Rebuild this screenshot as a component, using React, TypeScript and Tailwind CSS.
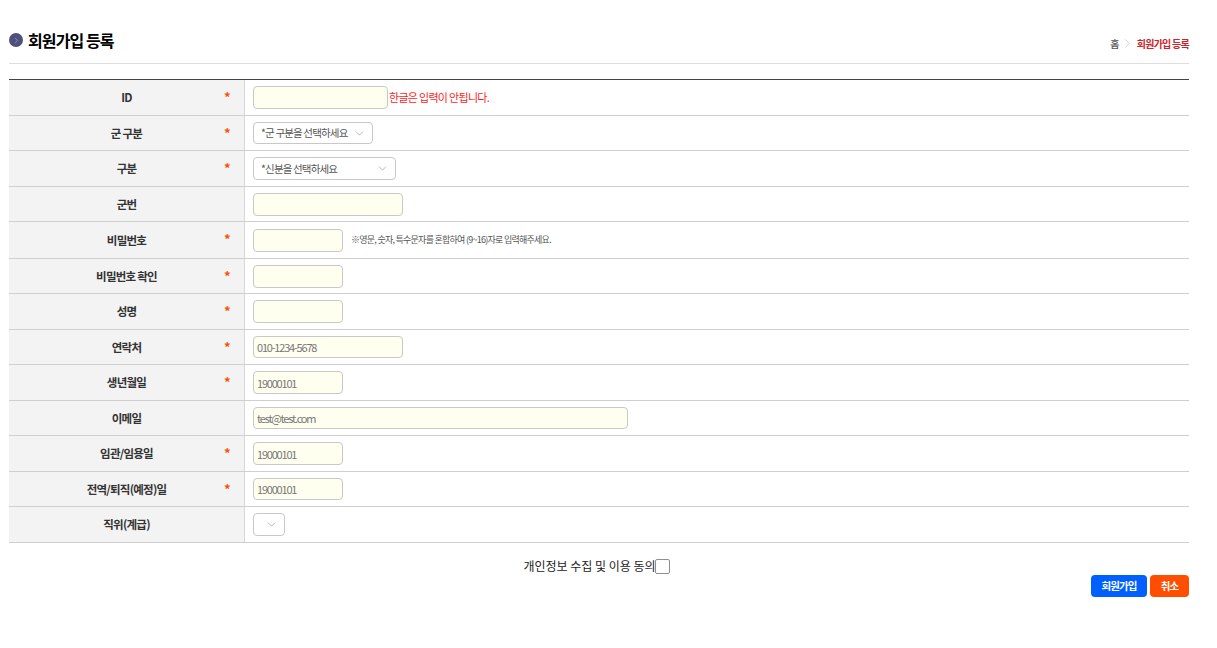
import { ChevronDown, ChevronRight } from 'lucide-react'
import type { ReactNode } from 'react'

const FONT = '"Noto Sans CJK KR", "Noto Sans", sans-serif'

function Row({ label, req, h, children }: { label: string; req?: boolean; h: string; children?: ReactNode }) {
  return (
    <div className={`flex border-b border-[#cfcfcf] ${h}`}>
      <div className="relative flex w-[236px] shrink-0 items-center justify-center border-r border-[#d8d8d8] bg-[#f3f3f3] pt-[1px] text-[11.5px] font-bold tracking-[-0.75px] text-[#333]">
        {label}
        {req && <span className="absolute left-[215px] top-[8px] text-[13px] font-bold leading-[18px] tracking-normal text-[#ff4e00]">*</span>}
      </div>
      <div className="flex flex-1 items-center pl-[8px]">{children}</div>
    </div>
  )
}

function Field({ w, ph }: { w: string; ph?: string }) {
  return (
    <input
      readOnly
      placeholder={ph}
      className={`${w} rounded-[4px] border border-[#c8c8c8] bg-[#ffffef] px-[3px] text-[11px] tracking-[-1.2px] outline-none placeholder:text-[#777]`}
    />
  )
}

function Select({ w, text }: { w: string; text?: string }) {
  return (
    <div className={`${w} flex items-center justify-between whitespace-nowrap rounded-[4px] border border-[#c8c8c8] bg-white pl-[7px] pr-[6px] text-[10.5px] tracking-[-0.84px] text-[#555]`}>
      <span>{text}</span>
      <ChevronDown className="ml-auto h-[13px] w-[13px] text-[#888]" strokeWidth={1.1} />
    </div>
  )
}

export default function App() {
  return (
    <div className="h-[648px] bg-white pl-[9px] pr-[28px]" style={{ fontFamily: FONT }}>
      {/* Title */}
      <div className="flex h-[64px] items-end justify-between border-b border-[#dddddd] pb-[11px]">
        <div className="flex items-center gap-[5px]">
          <span className="flex h-[14px] w-[14px] items-center justify-center rounded-full bg-[#50507c]">
            <ChevronRight className="h-[9px] w-[9px] text-[#b9b9d0]" strokeWidth={1.5} />
          </span>
          <h1 className="text-[16px] font-bold leading-[24px] tracking-[-0.9px] text-black">회원가입 등록</h1>
        </div>
        <div className="flex items-center pb-[1px] text-[10px] font-medium tracking-[-0.6px] text-[#555]">
          <span>홈</span>
          <ChevronRight className="mx-[1px] h-[15px] w-[15px] text-[#bbb]" strokeWidth={1} />
          <span className="ml-[1px] font-bold tracking-[-0.75px] text-[#c9252b]">회원가입 등록</span>
        </div>
      </div>

      {/* Form table */}
      <div className="mt-[15px] border-t border-[#444]">
        <Row label="ID" req h="h-[36px]">
          <Field w="h-[23px] w-[135px]" />
          <span className="ml-[1px] text-[11px] tracking-[-0.7px] text-[#ff1a1a]">한글은 입력이 안됩니다.</span>
        </Row>
        <Row label="군 구분" req h="h-[35px]">
          <Select w="h-[22px] w-[120px]" text="*군 구분을 선택하세요" />
        </Row>
        <Row label="구분" req h="h-[36px]">
          <Select w="h-[23px] w-[143px]" text="*신분을 선택하세요" />
        </Row>
        <Row label="군번" h="h-[35px]">
          <Field w="h-[23px] w-[150px]" />
        </Row>
        <Row label="비밀번호" req h="h-[37px]">
          <Field w="h-[23px] w-[90px]" />
          <span className="ml-[8px] text-[9px] tracking-[-0.74px] text-[#555]">※영문, 숫자, 특수문자를 혼합하여 (9~16)자로 입력해주세요.</span>
        </Row>
        <Row label="비밀번호 확인" req h="h-[35px]">
          <Field w="h-[23px] w-[90px]" />
        </Row>
        <Row label="성명" req h="h-[36px]">
          <Field w="h-[23px] w-[90px]" />
        </Row>
        <Row label="연락처" req h="h-[35px]">
          <Field w="h-[22px] w-[150px]" ph="010-1234-5678" />
        </Row>
        <Row label="생년월일" req h="h-[36px]">
          <Field w="h-[23px] w-[90px]" ph="19000101" />
        </Row>
        <Row label="이메일" h="h-[35px]">
          <Field w="h-[22px] w-[375px]" ph="test@test.com" />
        </Row>
        <Row label="임관/임용일" req h="h-[36px]">
          <Field w="h-[23px] w-[90px]" ph="19000101" />
        </Row>
        <Row label="전역/퇴직(예정)일" req h="h-[35px]">
          <Field w="h-[22px] w-[90px]" ph="19000101" />
        </Row>
        <Row label="직위(계급)" h="h-[36px]">
          <Select w="h-[23px] w-[32px]" />
        </Row>
      </div>

      {/* Agreement */}
      <div className="mt-[15px] flex h-[16px] items-center justify-center pr-[5px] text-[12px] leading-[16px] text-[#222]">
        <span>개인정보 수집 및 이용 동의</span>
        <span className="-ml-[1px] h-[15px] w-[15px] rounded-[2px] border border-[#8f8f8f] bg-white" />
      </div>

      {/* Buttons */}
      <div className="mt-[1px] flex justify-end gap-[3px] text-[10.5px] font-bold tracking-[-0.9px] text-white">
        <button className="h-[22px] w-[56px] rounded-[4px] bg-[#0060ff]">회원가입</button>
        <button className="h-[22px] w-[39px] rounded-[4px] bg-[#ff4e00]">취소</button>
      </div>
    </div>
  )
}
